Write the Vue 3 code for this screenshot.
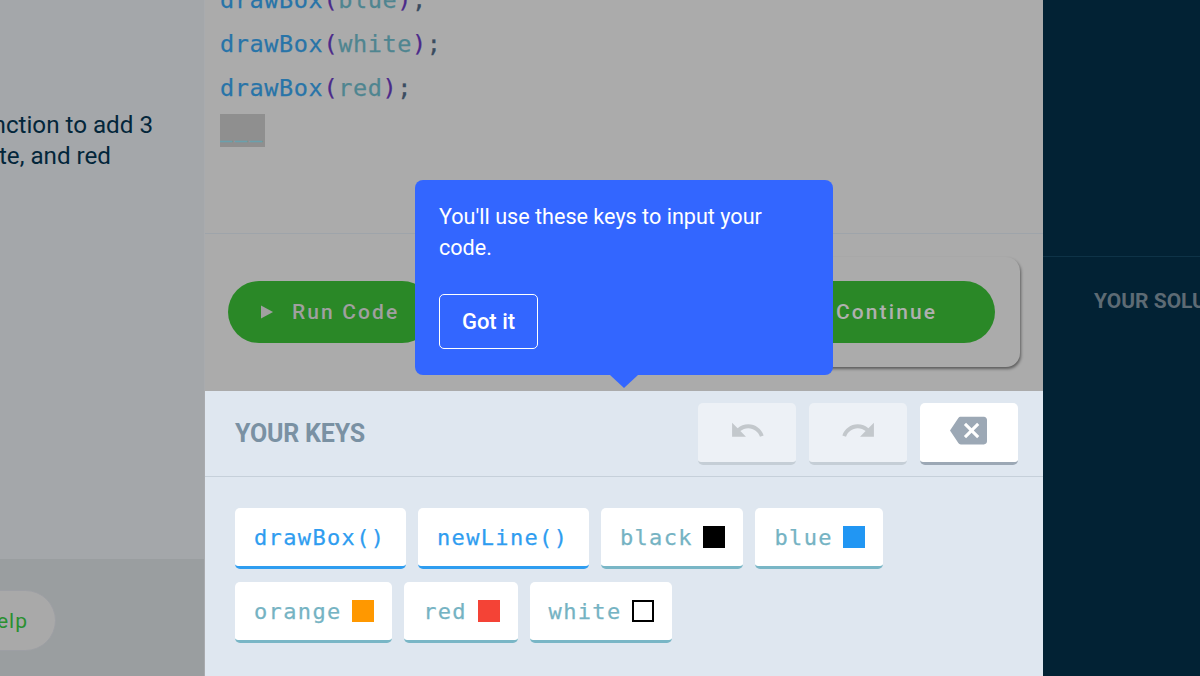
<script setup>
const codeLines = ['blue', 'white', 'red']
const keyRows = [
  [
    { label: 'drawBox()', fn: true },
    { label: 'newLine()', fn: true },
    { label: 'black', color: '#000000' },
    { label: 'blue', color: '#2196f3' }
  ],
  [
    { label: 'orange', color: '#ff9800' },
    { label: 'red', color: '#f44336' },
    { label: 'white', color: '#ffffff', outlined: true }
  ]
]
</script>

<template>
  <div class="page">
    <aside class="left">
      <div class="lesson">
        <div class="lesson-text">
          <div>Use the drawBox function to add 3</div>
          <div class="second">boxes: blue, white, and red</div>
        </div>
      </div>
      <div class="left-foot">
        <button class="help">Get Help</button>
      </div>
    </aside>

    <main class="center">
      <section class="code">
        <div v-for="arg in codeLines" :key="arg" class="line">
          <span class="fn">drawBox</span><span class="paren">(</span><span class="arg">{{ arg }}</span><span class="paren">)</span><span class="semi">;</span>
        </div>
        <div class="cursor">___</div>
      </section>

      <section class="actions">
        <button class="green run">
          <svg class="play" viewBox="0 0 14 14"><path d="M0 0 L13 7 L0 14 Z" /></svg>
          <span>Run Code</span>
        </button>
        <div class="continue-card">
          <button class="green">Continue</button>
        </div>
      </section>

      <section class="keyboard">
        <header class="kb-head">
          <h2>YOUR KEYS</h2>
          <div class="tools">
            <button class="tool off">
              <svg viewBox="0 0 24 24"><path d="M12.5 8c-2.65 0-5.05.99-6.9 2.6L2 7v9h9l-3.62-3.62c1.39-1.16 3.16-1.88 5.12-1.88 3.54 0 6.55 2.31 7.6 5.5l2.37-.78C21.08 11.03 17.15 8 12.5 8z" /></svg>
            </button>
            <button class="tool off">
              <svg viewBox="0 0 24 24"><path d="M18.4 10.6C16.55 8.99 14.15 8 11.5 8c-4.65 0-8.58 3.03-9.96 7.22L3.9 16c1.05-3.19 4.05-5.5 7.6-5.5 1.95 0 3.73.72 5.12 1.88L13 16h9V7l-3.6 3.6z" /></svg>
            </button>
            <button class="tool on">
              <svg viewBox="0 0 24 24"><path d="M22 3H7c-.69 0-1.23.35-1.59.88L0 12l5.41 8.11c.36.53.9.89 1.59.89h15c1.1 0 2-.9 2-2V5c0-1.1-.9-2-2-2zm-3 12.59L17.59 17 14 13.41 10.41 17 9 15.59 12.59 12 9 8.41 10.41 7 14 10.59 17.59 7 19 8.41 15.41 12 19 15.59z" /></svg>
            </button>
          </div>
        </header>
        <div class="keys">
          <div v-for="(row, i) in keyRows" :key="i" class="key-row">
            <button v-for="k in row" :key="k.label" class="key" :class="{ fnkey: k.fn }">
              <span>{{ k.label }}</span>
              <i v-if="k.color" class="swatch" :class="{ outlined: k.outlined }" :style="{ background: k.color }"></i>
            </button>
          </div>
        </div>
      </section>

      <div class="tip">
        <p>You'll use these keys to input your code.</p>
        <button class="got">Got it</button>
        <span class="tip-arrow"></span>
      </div>
    </main>

    <aside class="right">
      <div class="right-top"></div>
      <div class="right-title">YOUR SOLUTION</div>
    </aside>
  </div>
</template>

<style>
html, body { margin: 0; overflow: hidden; }
</style>

<style scoped>
.page {
  display: flex;
  width: 1200px;
  height: 676px;
  overflow: hidden;
  font-family: Roboto, sans-serif;
}
button { font-family: inherit; border: 0; padding: 0; cursor: pointer; }

/* left */
.left {
  width: 205px;
  flex: none;
  box-sizing: border-box;
  display: flex;
  flex-direction: column;
  background: #a4a7aa;
  border-right: 1px solid #a9abae;
  overflow: hidden;
}
.lesson { flex: 1; padding-top: 110px; overflow: hidden; }
.lesson-text {
  width: 453px;
  margin-left: -300px;
  text-align: right;
  white-space: nowrap;
  font-size: 24.2px;
  line-height: 31px;
  color: #03263a;
}
.second { padding-right: 42px; }
.left-foot {
  height: 117px;
  flex: none;
  box-sizing: border-box;
  padding-top: 31px;
  background: #9a9ea0;
}
.help {
  display: block;
  width: 161px;
  height: 61px;
  margin-left: -105px;
  box-sizing: border-box;
  border: 1px solid #9d9fa4;
  border-radius: 31px;
  background: #a9a9a9;
  color: #2a9030;
  font-size: 21px;
  letter-spacing: 1px;
  text-align: right;
  padding-right: 27px;
}

/* center */
.center {
  position: relative;
  width: 838px;
  flex: none;
  display: flex;
  flex-direction: column;
  background: #ababab;
}
.code {
  height: 234px;
  flex: none;
  box-sizing: border-box;
  padding: 0 0 86px 15px;
  display: flex;
  flex-direction: column;
  justify-content: flex-end;
  align-items: flex-start;
  overflow: hidden;
  border-bottom: 1px solid #9ea4aa;
  font-family: "DejaVu Sans Mono", monospace;
  font-size: 23.5px;
  letter-spacing: .62px;
  -webkit-text-stroke: .25px currentColor;
}
.line { height: 44px; line-height: 44px; flex: none; white-space: pre; }
.fn { color: #2874a8; }
.paren { color: #4b2a8a; }
.arg { color: #4f8590; }
.semi { color: #3a4c60; }
.cursor {
  flex: none;
  height: 33px;
  width: 45px;
  margin-top: 4px;
  background: #8f8f8f;
  color: #6ba0ac;
  font-size: 20px;
  line-height: 32px;
  letter-spacing: 3px;
  -webkit-text-stroke: .7px currentColor;
  overflow: hidden;
}
.actions {
  height: 157px;
  flex: none;
  position: relative;
  display: flex;
  justify-content: space-between;
  box-sizing: border-box;
  padding: 23px 23px 0 23px;
}
.green {
  height: 62px;
  border-radius: 31px;
  background: #2a8827;
  color: #b0b0b0;
  font-size: 21px;
  font-weight: 500;
  letter-spacing: 2.1px;
}
.run {
  width: 205px;
  margin-top: 24px;
  display: flex;
  align-items: center;
  gap: 18px;
  padding-left: 33px;
  box-sizing: border-box;
  color: #a0a0a0;
}
.play { width: 13px; height: 14px; fill: #a0a0a0; }
.continue-card {
  width: 400px;
  height: 110px;
  box-sizing: border-box;
  padding: 24px 25px 0 0;
  display: flex;
  justify-content: flex-end;
  background: #ababab;
  border-radius: 14px;
  box-shadow: 1px 2px 3px rgba(0, 0, 0, .45);
}
.continue-card .green { width: 350px; padding-left: 191px; text-align: left; }

.keyboard {
  flex: 1;
  background: #dfe7f0;
}
.kb-head {
  height: 86px;
  box-sizing: border-box;
  display: flex;
  align-items: flex-start;
  justify-content: space-between;
  padding: 12px 25px 0 30px;
  border-bottom: 1px solid #c6d0da;
}
.kb-head h2 {
  margin: 0;
  padding-top: 16px;
  font-size: 25px;
  line-height: 30px;
  font-weight: 700;
  letter-spacing: -.2px;
  color: #7a91a3;
}
.tools { display: flex; gap: 13px; }
.tool {
  width: 98px;
  height: 62px;
  box-sizing: border-box;
  border-radius: 5px;
  display: flex;
  align-items: center;
  justify-content: center;
  padding-bottom: 4px;
}
.tool svg { width: 37px; height: 37px; }
.tool.off { background: #edf1f6; border-bottom: 3px solid #c5ced6; }
.tool.off svg { fill: #c3c8cc; }
.tool.on { background: #fff; border-bottom: 3px solid #9ca8b5; padding-right: 2px; }
.tool.on svg { fill: #9ca8b5; }
.keys {
  padding: 31px 30px 0;
  display: flex;
  flex-direction: column;
  gap: 13px;
}
.key-row { display: flex; gap: 12px; }
.key {
  height: 61px;
  box-sizing: border-box;
  padding: 0 18px 0 19px;
  display: flex;
  align-items: center;
  gap: 10.6px;
  background: #fff;
  border-radius: 5px;
  border-bottom: 3px solid #79b6c6;
  color: #75b3c3;
  font-family: "DejaVu Sans Mono", monospace;
  font-size: 22px;
  letter-spacing: 1.35px;
  -webkit-text-stroke: .25px currentColor;
}
.fnkey { padding-right: 20.6px; border-bottom-color: #2f9df0; color: #2f9df0; }
.swatch {
  width: 22px;
  height: 22px;
  flex: none;
  box-sizing: border-box;
  display: block;
}
.swatch.outlined { border: 2px solid #000; }

/* tooltip */
.tip {
  position: absolute;
  left: 210px;
  top: 180px;
  width: 418px;
  height: 195px;
  box-sizing: border-box;
  padding: 21px 24px;
  background: #3366ff;
  border-radius: 8px;
  color: #fff;
}
.tip p {
  margin: 0;
  font-size: 21.6px;
  line-height: 31px;
}
.got {
  display: block;
  margin-top: 31px;
  width: 99px;
  height: 55px;
  box-sizing: border-box;
  background: transparent;
  border: 1.5px solid #fff;
  border-radius: 5px;
  color: #fff;
  font-size: 22px;
  font-weight: 500;
}
.tip-arrow {
  position: absolute;
  left: 195px;
  bottom: -13px;
  width: 0;
  height: 0;
  border-left: 14px solid transparent;
  border-right: 14px solid transparent;
  border-top: 13px solid #3366ff;
}

/* right */
.right {
  flex: 1;
  min-width: 0;
  background: #022234;
  overflow: hidden;
}
.right-top { height: 256px; border-bottom: 1px solid #0e3347; box-sizing: content-box; }
.right-title {
  padding: 32px 0 0 51px;
  font-size: 21px;
  line-height: 25px;
  font-weight: 700;
  color: #5d6b74;
  white-space: nowrap;
}
</style>
